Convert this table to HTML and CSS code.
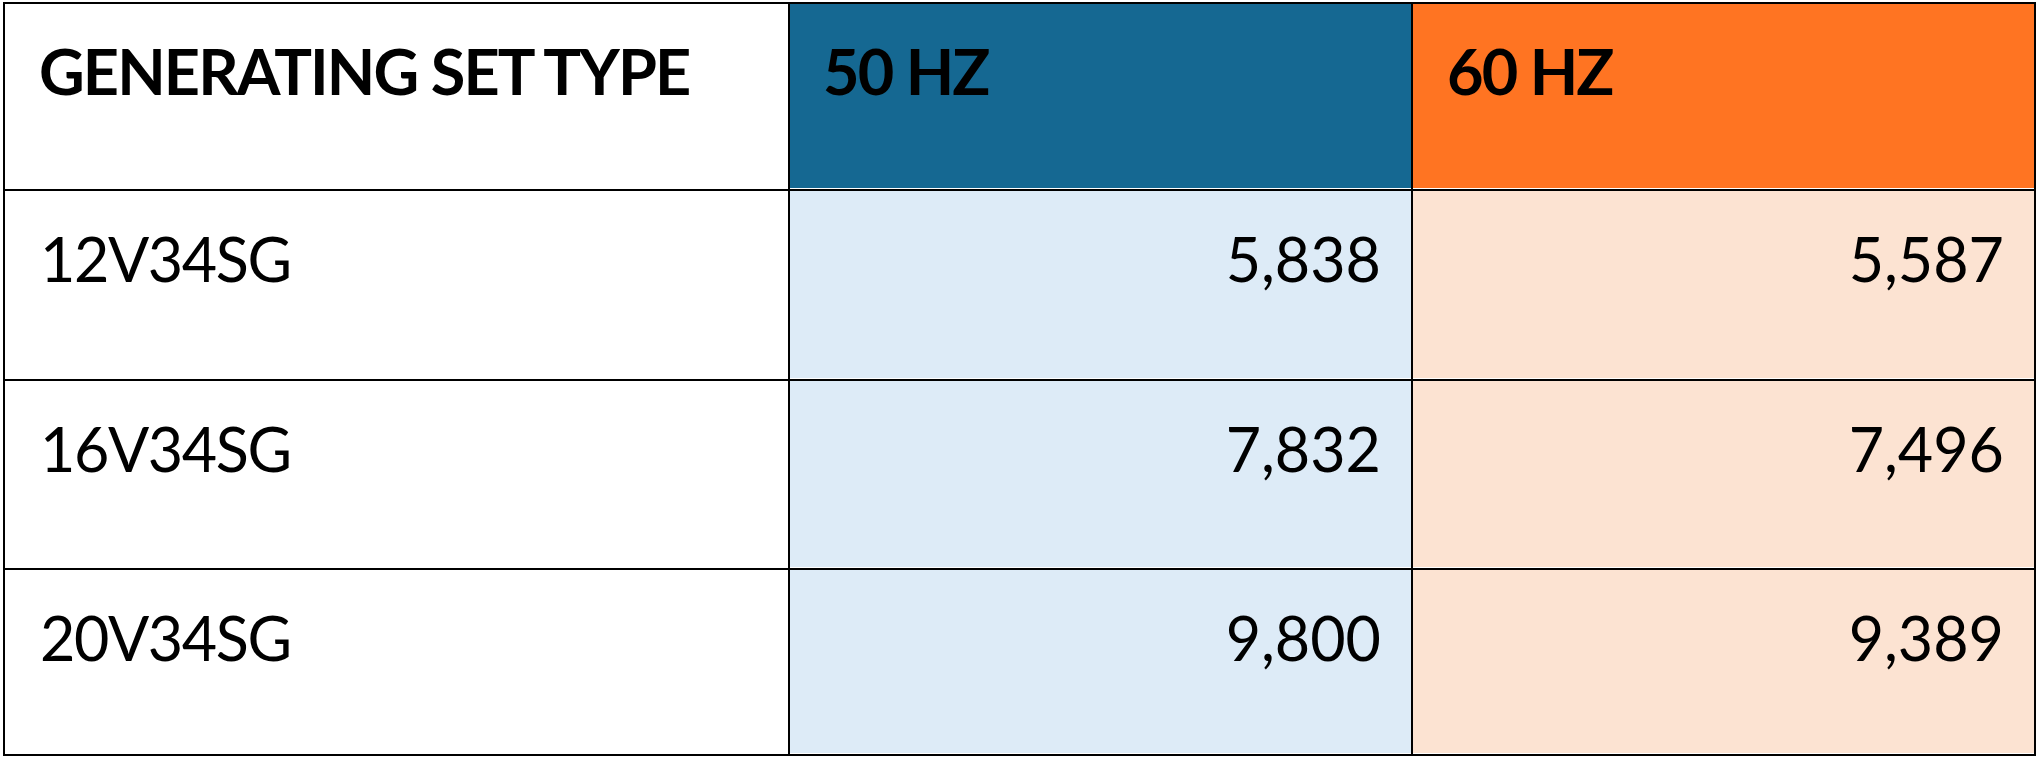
FILE: index.html
```html
<!DOCTYPE html>
<html lang="en">

<head>
    <meta charset="utf-8">
    <meta name="viewport" content="width=device-width, initial-scale=1">
    <link rel="stylesheet" href="styles.css">
</head>

<body>
    <div class="sheet">
        <div class="cell head">GENERATING SET TYPE</div>
        <div class="cell head hz50">50 HZ</div>
        <div class="cell head hz60">60 HZ</div>

        <div class="cell type">12V34SG</div>
        <div class="cell num val50">5,838</div>
        <div class="cell num val60">5,587</div>

        <div class="cell type">16V34SG</div>
        <div class="cell num val50">7,832</div>
        <div class="cell num val60">7,496</div>

        <div class="cell type">20V34SG</div>
        <div class="cell num val50">9,800</div>
        <div class="cell num val60">9,389</div>
    </div>
</body>

</html>
```

FILE: styles.css
```css
html,
body {
    margin: 0;
    padding: 0;
    background: #fff;
}

.sheet {
    display: grid;
    grid-template-columns: 783px 621px 621px;
    grid-template-rows: 185px 188px 187px 184px;
    gap: 2px;
    padding: 2px;
    width: max-content;
    margin: 2px 0 0 3px;
    background: #000;
    font-family: Lato, "Liberation Sans", sans-serif;
    color: #000;
}

.cell {
    background: #fff;
    padding: 31px 30px 0 35px;
    font-size: 61px;
    line-height: 1.2;
    white-space: nowrap;
}

.head {
    font-weight: bold;
    font-size: 63px;
    letter-spacing: -1.9px;
    padding-top: 29px;
    padding-left: 34px;
}

.type {
    letter-spacing: -1.4px;
}

.hz50 {
    background: #156892;
    padding-left: 33px;
    box-shadow: inset 0 -1px 0 #fff;
}

.hz60 {
    background: #ff7422;
    padding-left: 34px;
    box-shadow: inset 0 -1px 0 #fff;
}

.num {
    text-align: right;
    padding-left: 0;
}

.val50 {
    background: #ddebf7;
    box-shadow: inset 0 -1px 0 #fff;
}

.val60 {
    background: #fce3d2;
    box-shadow: inset 0 -1px 0 #fff;
}
```
